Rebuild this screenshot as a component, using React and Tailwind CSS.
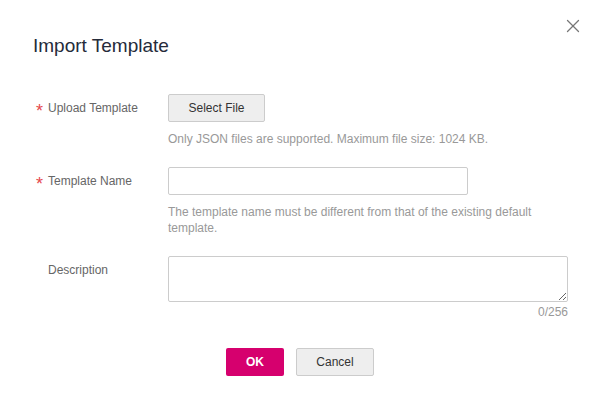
import { X } from 'lucide-react';

function Row({ label, required, children }) {
  return (
    <div className="flex items-start">
      <div className="w-[132px] h-[28px] flex items-center text-[12px] text-[#666]">
        <span className="w-[12px] h-[18px] text-[#e5484d] text-[18px] leading-none translate-y-[3px]">{required ? '*' : ''}</span>
        <span>{label}</span>
      </div>
      <div className="flex flex-col">{children}</div>
    </div>
  );
}

export default function App() {
  return (
    <div className="relative w-[600px] h-[402px] bg-white font-['Liberation_Sans',Arial,sans-serif] text-[#333]">
      {/* close */}
      <button className="absolute top-[15px] left-[562px] w-[22px] h-[22px] flex items-center justify-center text-[#777]">
        <X size={22} strokeWidth={1.4} />
      </button>

      <h2 className="pt-[36px] pl-[33px] text-[19px] leading-[20px] text-[#252b3a]">Import Template</h2>

      <form className="pl-[36px] mt-[38px] flex flex-col gap-[20px]">
        <Row label="Upload Template" required>
          <button type="button" className="w-[97px] h-[28px] bg-[#eee] border border-[#ccc] rounded-[2px] text-[12px] text-[#333]">
            Select File
          </button>
          <p className="mt-[9px] text-[12px] leading-[16px] text-[#999]">
            Only JSON files are supported. Maximum file size: 1024 KB.
          </p>
        </Row>

        <Row label="Template Name" required>
          <input className="w-[300px] h-[28px] border border-[#ccc] rounded-[2px] px-2 text-[12px] outline-none" />
          <p className="mt-[9px] w-[400px] text-[12px] leading-[16px] text-[#999]">
            The template name must be different from that of the existing default template.
          </p>
        </Row>

        <Row label="Description">
          <textarea className="block w-[400px] h-[46px] border border-[#ccc] rounded-[2px] px-2 py-1 text-[12px] outline-none" />
          <span className="mt-[2px] text-right text-[12px] leading-[16px] text-[#999]">0/256</span>
        </Row>
      </form>

      <div className="mt-[28px] flex justify-center gap-[12px]">
        <button className="w-[58px] h-[28px] bg-[#d6006e] rounded-[2px] text-white text-[12px] font-bold">OK</button>
        <button className="w-[78px] h-[28px] bg-[#eee] border border-[#ccc] rounded-[2px] text-[12px] text-[#333]">Cancel</button>
      </div>
    </div>
  );
}
